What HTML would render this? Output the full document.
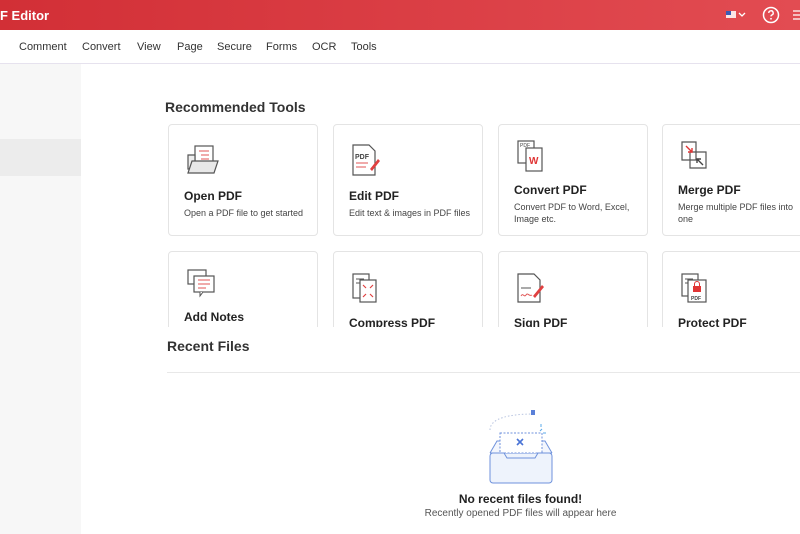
<!DOCTYPE html>
<html><head><style>
*{margin:0;padding:0;box-sizing:border-box}
body{width:800px;height:534px;overflow:hidden;font-family:"Liberation Sans",sans-serif;background:#fff;position:relative;color:#222}
.hdr{position:absolute;left:0;top:0;width:800px;height:30px;background:linear-gradient(90deg,#d22f36,#e24c52)}
.hdr .t{position:absolute;left:0;top:8px;color:#fff;font-weight:bold;font-size:13px}
.tb{position:absolute;top:30px;left:0;width:800px;height:34px;border-bottom:1px solid #e6e2ee;background:#fff}
.tb span{position:absolute;top:11px;font-size:11px;color:#333}
.side{position:absolute;left:0;top:64px;width:81px;height:470px;background:#f7f7f7}
.sel{position:absolute;left:0;top:139px;width:81px;height:37px;background:#ececec}
.h{position:absolute;font-size:14px;font-weight:bold;color:#333}
.card{position:absolute;width:150px;height:112px;border:1px solid #e4e4e4;border-radius:4px;background:#fff}
.card b{position:absolute;left:15px;font-size:12px;color:#222;font-weight:600}
.card p{position:absolute;left:15px;font-size:9px;color:#444;line-height:12px;width:130px}
.card svg{position:absolute;left:16px;top:18px}
.cover{position:absolute;left:81px;top:327px;width:719px;height:207px;background:#fff}
</style></head><body>
<div class="hdr"><div class="t">F Editor</div>
<svg style="position:absolute;left:726px;top:10px" width="24" height="10"><rect x="0" y="1" width="10" height="7" fill="#fff" opacity=".85"/><rect x="0" y="1" width="5" height="4" fill="#3b5bb5"/><path d="M13 3l3 3 3-3" stroke="#fff" stroke-width="1.3" fill="none"/></svg>
<svg style="position:absolute;left:762px;top:6px" width="18" height="18"><circle cx="9" cy="9" r="7.5" stroke="#fff" stroke-width="1.5" fill="none"/><path d="M6.8 7a2.2 2.2 0 1 1 3 2c-.6.3-.8.7-.8 1.4" stroke="#fff" stroke-width="1.4" fill="none"/><circle cx="9" cy="12.8" r=".9" fill="#fff"/></svg>
<svg style="position:absolute;left:793px;top:10px" width="7" height="10"><path d="M0 1h7M0 5h7M0 9h7" stroke="#fff" stroke-width="1.2"/></svg>
</div>
<div class="tb"><span style="left:-3px">t</span><span style="left:19px">Comment</span><span style="left:82px">Convert</span><span style="left:137px">View</span><span style="left:177px">Page</span><span style="left:217px">Secure</span><span style="left:266px">Forms</span><span style="left:312px">OCR</span><span style="left:351px">Tools</span></div>
<div class="side"></div><div class="sel"></div>
<div class="h" style="left:165px;top:99px">Recommended Tools</div>

<div class="card" style="left:168px;top:124px">
<svg width="34" height="34"><rect x="10" y="3" width="18" height="20" fill="#fff" stroke="#555" stroke-width="1.2"/><path d="M14 8h10M16 12h8M16 16h8" stroke="#e05555"/><path d="M3 12h7v14H3z" fill="#eee" stroke="#555" stroke-width="1.2"/><path d="M3 30l4-12h26l-4 12z" fill="#e8e8e8" stroke="#555" stroke-width="1.2"/></svg>
<b style="top:64px">Open PDF</b><p style="top:82px">Open a PDF file to get started</p></div>
<div class="card" style="left:333px;top:124px">
<svg width="34" height="34"><path d="M3 2h16l6 6v24H3z" fill="#fff" stroke="#555" stroke-width="1.2"/><text x="5" y="16" font-size="7" font-weight="bold" fill="#444" font-family="Liberation Sans">PDF</text><path d="M6 20h12M6 24h10" stroke="#e05555"/><path d="M20 26l8-10 2 2-8 10z" fill="#e04040"/></svg>
<b style="top:64px">Edit PDF</b><p style="top:82px">Edit text &amp; images in PDF files</p></div>
<div class="card" style="left:498px;top:124px">
<svg width="34" height="34" style="top:14px"><rect x="3" y="2" width="16" height="22" fill="#fff" stroke="#555" stroke-width="1.2"/><text x="5" y="8" font-size="5" fill="#444" font-family="Liberation Sans">PDF</text><rect x="11" y="9" width="16" height="23" fill="#fff" stroke="#555" stroke-width="1.2"/><text x="14" y="25" font-size="10" font-weight="bold" fill="#e03535" font-family="Liberation Sans">W</text></svg>
<b style="top:58px">Convert PDF</b><p style="top:76px">Convert PDF to Word, Excel, Image etc.</p></div>
<div class="card" style="left:662px;top:124px">
<svg width="34" height="34" style="top:14px"><path d="M3 3h14v10h-6v8H3z" fill="#fff" stroke="#555" stroke-width="1.2"/><path d="M17 13h10v16H11v-8h6z" fill="#fff" stroke="#555" stroke-width="1.2"/><path d="M7 7l6 6M13 9v4H9" stroke="#e03535" stroke-width="1.4" fill="none"/><path d="M24 26l-6-6M18 24v-4h4" stroke="#444" stroke-width="1.4" fill="none"/></svg>
<b style="top:58px">Merge PDF</b><p style="top:76px">Merge multiple PDF files into one</p></div>

<div class="card" style="left:168px;top:251px">
<svg width="34" height="34" style="top:16px"><rect x="3" y="2" width="18" height="14" fill="#fff" stroke="#555" stroke-width="1.2"/><rect x="9" y="8" width="20" height="16" fill="#fff" stroke="#555" stroke-width="1.2"/><path d="M18 24l-3 4v-4" fill="#fff" stroke="#555"/><path d="M13 12h12M13 16h12M13 20h8" stroke="#e05555"/></svg>
<b style="top:58px">Add Notes</b></div>
<div class="card" style="left:333px;top:251px">
<svg width="34" height="34" style="top:20px"><rect x="3" y="2" width="16" height="24" fill="#fff" stroke="#555" stroke-width="1.2"/><path d="M6 7h8M6 11h8" stroke="#555"/><rect x="10" y="8" width="16" height="22" fill="#fff" stroke="#555" stroke-width="1.2"/><path d="M13 13l3 3M23 13l-3 3M13 25l3-3M23 25l-3-3" stroke="#e04040" stroke-width="1.2"/></svg>
<b style="top:64px">Compress PDF</b></div>
<div class="card" style="left:498px;top:251px">
<svg width="34" height="34" style="top:20px"><path d="M3 2h16l6 6v22H3z" fill="#fff" stroke="#555" stroke-width="1.2"/><path d="M6 16h10" stroke="#555"/><path d="M6 24c2-4 3 2 5-1s3 2 6 0" stroke="#e05555" fill="none"/><path d="M18 24l9-11 2 2-9 11z" fill="#e04040"/></svg>
<b style="top:64px">Sign PDF</b></div>
<div class="card" style="left:662px;top:251px">
<svg width="34" height="34" style="top:20px"><rect x="3" y="2" width="16" height="22" fill="#fff" stroke="#555" stroke-width="1.2"/><path d="M6 7h8M6 11h8" stroke="#555"/><rect x="9" y="8" width="18" height="22" fill="#fff" stroke="#555" stroke-width="1.2"/><rect x="14" y="14" width="8" height="6" fill="#e03535"/><path d="M15.5 14v-2a2.5 2.5 0 0 1 5 0v2" stroke="#e03535" fill="none"/><text x="12" y="28" font-size="5" font-weight="bold" fill="#444" font-family="Liberation Sans">PDF</text></svg>
<b style="top:64px">Protect PDF</b></div>

<div class="cover"></div>
<div class="h" style="left:167px;top:338px;font-weight:600">Recent Files</div>
<div style="position:absolute;left:167px;top:372px;width:633px;height:1px;background:#e8e8e8"></div>
<svg style="position:absolute;left:485px;top:405px" width="75" height="82">
<path d="M5 25c0-12 20-16 44-16" stroke="#b8c4e0" stroke-dasharray="1.5 2" fill="none"/>
<path d="M46 5h4v5h-4z" fill="#5a80d8"/>
<rect x="5" y="48" width="62" height="30" rx="3" fill="#eef3fc" stroke="#6f92dc"/>
<path d="M5 48l7-12h48l7 12" fill="#f3f6fd" stroke="#6f92dc"/>
<rect x="15" y="28" width="42" height="20" fill="#fff" stroke="#6f92dc" stroke-dasharray="2 1.5"/>
<path d="M32 34l6 6M38 34l-6 6" stroke="#4a74d6" stroke-width="1.6"/>
<path d="M5 48h14l3 5h28l3-5h14" fill="none" stroke="#6f92dc"/>
<path d="M55 26l2-2M58 28h3M56 22v-3" stroke="#5aa8e8"/>
</svg>
<div style="position:absolute;left:400px;top:492px;width:241px;text-align:center;font-size:12px;font-weight:bold;color:#222">No recent files found!</div>
<div style="position:absolute;left:400px;top:508px;width:241px;text-align:center;font-size:10px;color:#555">Recently opened PDF files will appear here</div>
</body></html>
